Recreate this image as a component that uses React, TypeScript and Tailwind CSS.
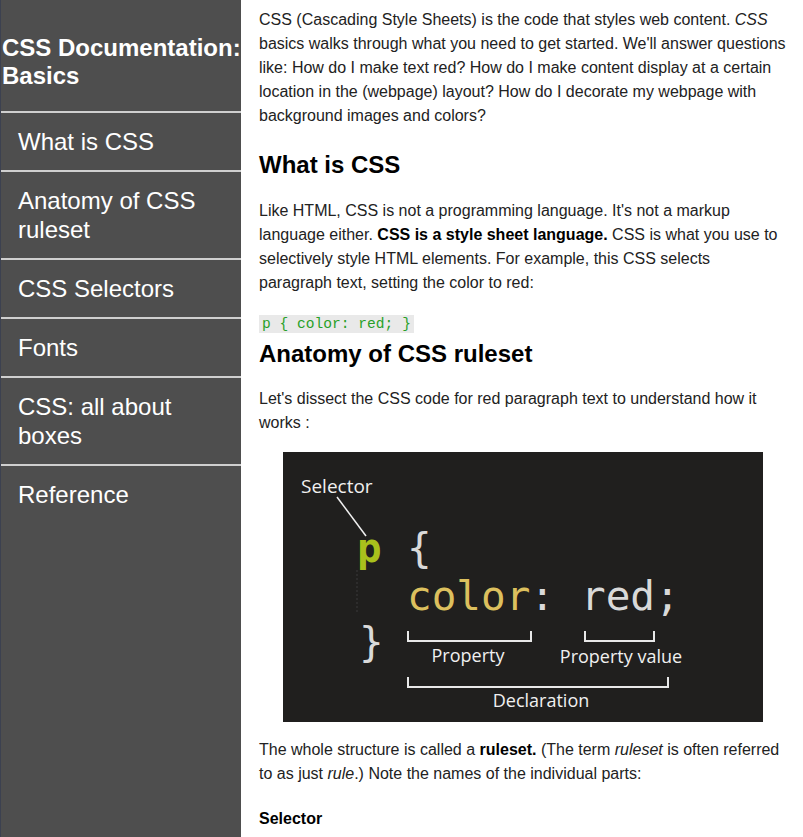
const navItems = [
  "What is CSS",
  "Anatomy of CSS ruleset",
  "CSS Selectors",
  "Fonts",
  "CSS: all about boxes",
  "Reference",
];

function RulesetDiagram() {
  const mono = "'DejaVu Sans Mono', 'Liberation Mono', monospace";
  const sans = "'Open Sans', 'Noto Sans', sans-serif";
  return (
    <svg width="480" height="270" viewBox="0 0 480 270" className="block">
      <rect width="480" height="270" fill="#201f1e" />
      <text x="18" y="41" fill="#f0f0f0" fontSize="19" fontFamily={sans}>
        Selector
      </text>
      <line x1="54" y1="45" x2="83" y2="84" stroke="#f0f0f0" strokeWidth="1.5" />
      <text x="74" y="110" fill="#a9c01c" fontSize="41" fontWeight="bold" fontFamily={mono}>
        p
      </text>
      <text x="124" y="110" fill="#d9d9d9" fontSize="41" fontFamily={mono}>
        {"{"}
      </text>
      <line x1="74" y1="118" x2="74" y2="160" stroke="#3a3a3a" strokeWidth="1" strokeDasharray="2 2" />
      <text x="124" y="158" fill="#dcc05e" fontSize="41" fontFamily={mono}>
        color
      </text>
      <text x="247" y="158" fill="#d9d9d9" fontSize="41" fontFamily={mono}>
        :
      </text>
      <text x="298" y="158" fill="#d9d9d9" fontSize="41" fontFamily={mono}>
        red;
      </text>
      <text x="76" y="204" fill="#d9d9d9" fontSize="41" fontFamily={mono}>
        {"}"}
      </text>
      <path d="M125 179 V189 H248 V179" fill="none" stroke="#e8e8e8" strokeWidth="2" />
      <path d="M302 179 V189 H371 V179" fill="none" stroke="#e8e8e8" strokeWidth="2" />
      <path d="M125 225 V235 H385 V225" fill="none" stroke="#e8e8e8" strokeWidth="2" />
      <text x="185" y="210" fill="#f0f0f0" fontSize="18" textAnchor="middle" fontFamily={sans}>
        Property
      </text>
      <text x="338" y="211" fill="#f0f0f0" fontSize="18" textAnchor="middle" fontFamily={sans}>
        Property value
      </text>
      <text x="258" y="255" fill="#f0f0f0" fontSize="18" textAnchor="middle" fontFamily={sans}>
        Declaration
      </text>
    </svg>
  );
}

export default function App() {
  return (
    <div
      className="flex min-h-screen bg-white"
      style={{ fontFamily: "'Liberation Sans', Arial, sans-serif" }}
    >
      <nav className="w-[241px] shrink-0 bg-[#4e4e4e] border-l border-[#3c4150] text-white">
        <header className="pl-[1px] pt-[34px] pb-[21px] text-[24px] leading-[28px] font-bold">
          CSS Documentation: Basics
        </header>
        {navItems.map((item) => (
          <a
            key={item}
            href="#"
            className="block border-t-2 border-[#cfcfcf] pl-[17px] pr-3 py-[14px] text-[24px] leading-[29px] text-white"
          >
            {item}
          </a>
        ))}
      </nav>

      <main className="flex-1 pl-[18px] pr-[16px] text-[16px] leading-[24px] text-[#222]">
        <p className="mt-[8px]">
          CSS (Cascading Style Sheets) is the code that styles web content. <em>CSS</em> basics walks
          through what you need to get started. We'll answer questions like: How do I make text red?
          How do I make content display at a certain location in the (webpage) layout? How do I
          decorate my webpage with background images and colors?
        </p>

        <h2 className="mt-[23px] text-[24px] leading-[28px] font-bold text-black">What is CSS</h2>
        <p className="mt-[20px]">
          Like HTML, CSS is not a programming language. It's not a markup language either.{" "}
          <strong className="text-black">CSS is a style sheet language.</strong> CSS is what you use to
          selectively style HTML elements. For example, this CSS selects paragraph text, setting the
          color to red:
        </p>
        <div className="mt-[20px] flex">
          <code
            className="bg-[#e9e9e9] px-[3px] text-[14.6px] leading-[18px] text-[#28a028]"
            style={{ fontFamily: "'Liberation Mono', 'Courier New', monospace" }}
          >
            p {"{"} color: red; {"}"}
          </code>
        </div>

        <h2 className="mt-[7px] text-[24px] leading-[28px] font-bold text-black">
          Anatomy of CSS ruleset
        </h2>
        <p className="mt-[19px]">
          Let's dissect the CSS code for red paragraph text to understand how it works :
        </p>
        <div className="mt-[17px] flex justify-center">
          <RulesetDiagram />
        </div>
        <p className="mt-[16px]">
          The whole structure is called a <strong className="text-black">ruleset.</strong> (The term{" "}
          <em>ruleset</em> is often referred to as just <em>rule</em>.) Note the names of the
          individual parts:
        </p>
        <h4 className="mt-[21px] font-bold text-black">Selector</h4>
      </main>
    </div>
  );
}
